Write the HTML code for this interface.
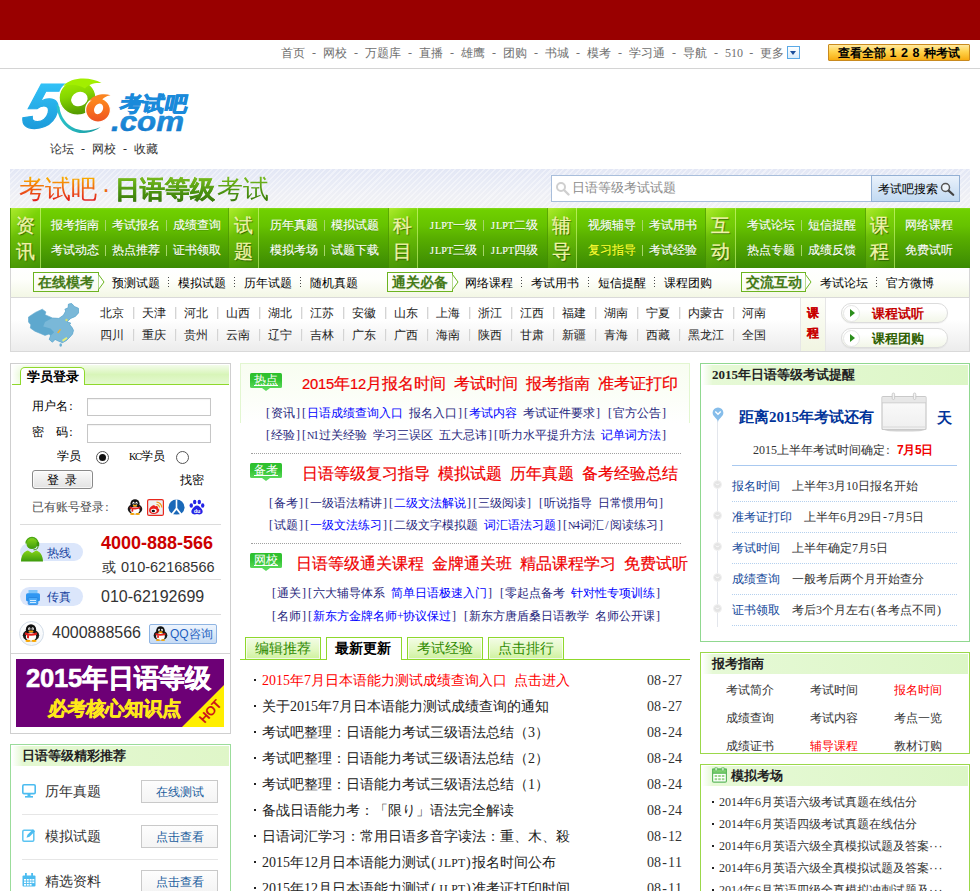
<!DOCTYPE html>
<html lang="zh"><head><meta charset="utf-8"><title>考试吧 日语等级考试</title>
<style>
*{margin:0;padding:0;box-sizing:border-box}
html,body{width:980px;height:891px;overflow:hidden;background:#fff}
body{position:relative;font-family:"Liberation Sans",sans-serif;font-size:12px;line-height:12px;color:#333}
.t{position:absolute;white-space:nowrap;font-size:12px;line-height:12px}
i{display:inline-block;width:.5em;text-align:center;font-style:normal;font-family:"Liberation Serif",serif}
i.u{font-size:.84em;width:.595em;vertical-align:baseline}
u{display:inline-block;width:1em;text-decoration:none;letter-spacing:.8px;font-family:"Liberation Sans",sans-serif;text-align:center}
.s i{font-family:"Liberation Sans",sans-serif}
.f13{font-size:13px;line-height:13px}
.f14{font-size:14px;line-height:14px}
.f15{font-size:15px;line-height:15px}
.f16{font-size:16px;line-height:16px}
.f18{font-size:18px;line-height:18px}
.b{font-weight:bold}
.g6{color:#707070}
.w{color:#fff;-webkit-text-stroke:.12px #fff;text-shadow:0 1px 0 rgba(40,90,0,.4)}
.y{color:#ff3;-webkit-text-stroke:.12px #ff3;text-shadow:0 1px 0 rgba(40,90,0,.4)}
.lab{color:#f0f4a8;font-size:19px;line-height:19px;-webkit-text-stroke:.3px #f0f4a8;text-shadow:1px 1px 1px rgba(30,70,0,.8)}
.nv{color:#26267c}
.bl{color:#00f}
.rd{color:#f00}
.hd{color:#f00000;font-size:16px;line-height:16px;-webkit-text-stroke:.2px #f00000}
.hd i{font-family:"Liberation Sans",sans-serif;font-size:.92em;width:.5435em}
.k{color:#000}
.bk{color:#222}
.lnk{color:#1b4ea0}
.dt{color:#333;font-size:14px;line-height:14px}
.sep{position:absolute;width:1px;background:#d4d4d4;box-shadow:1px 0 0 #f0f0f0}
.gsep{position:absolute;width:1px;height:11px;background:#a6d66a}
.dsep{position:absolute;width:1px;height:12px;background:repeating-linear-gradient(#4a4a4a 0,#4a4a4a 1px,rgba(0,0,0,0) 1px,rgba(0,0,0,0) 3px)}
</style></head>
<body>
<!-- part1 -->
<div style="position:absolute;left:0px;top:0px;width:980px;height:40px;background:#990000"></div>
<span class="t g6" style="left:281px;top:47px;">首页<i>&nbsp;</i><i>-</i><i>&nbsp;</i>网校<i>&nbsp;</i><i>-</i><i>&nbsp;</i>万题库<i>&nbsp;</i><i>-</i><i>&nbsp;</i>直播<i>&nbsp;</i><i>-</i><i>&nbsp;</i>雄鹰<i>&nbsp;</i><i>-</i><i>&nbsp;</i>团购<i>&nbsp;</i><i>-</i><i>&nbsp;</i>书城<i>&nbsp;</i><i>-</i><i>&nbsp;</i>模考<i>&nbsp;</i><i>-</i><i>&nbsp;</i>学习通<i>&nbsp;</i><i>-</i><i>&nbsp;</i>导航<i>&nbsp;</i><i>-</i><i>&nbsp;</i><i>5</i><i>1</i><i>0</i></span>
<span class="t g6" style="left:742px;top:47px;width:17px;letter-spacing:-.3px;"><i>&nbsp;</i><i>-</i><i>&nbsp;</i></span>
<span class="t g6" style="left:759.5px;top:47px;">更多</span>
<div style="position:absolute;left:787px;top:46px;width:13px;height:13px;border:1px solid #5aa9e6;background:linear-gradient(#fff,#d8ecfb);"><div style="position:absolute;left:2px;top:4px;width:0;height:0;border-left:3.5px solid transparent;border-right:3.5px solid transparent;border-top:4px solid #1b4f9c"></div></div>
<div style="position:absolute;left:828px;top:44px;width:142px;height:17px;border:1px solid #c98a1e;background:linear-gradient(#ffe9a0 0,#ffd24a 45%,#f7ac12 100%);border-radius:1px"></div>
<span class="t b k" style="left:838px;top:47px;">查看全部</span>
<span class="t b k s" style="left:886px;top:47px;font-size:12.5px;left:887px;"><i style="width:12px">1</i><i style="width:11px">2</i><i style="width:12px">8</i></span>
<span class="t b k" style="left:924px;top:47px;">种考试</span>
<div style="position:absolute;left:0px;top:68px;width:980px;height:1px;background:#d4d4d4"></div>
<svg style="position:absolute;left:18px;top:76px" width="175" height="62" viewBox="18 76 175 62">
<defs>
<linearGradient id="g5" x1="0" y1="0" x2="0" y2="1"><stop offset="0" stop-color="#38ccff"/><stop offset="1" stop-color="#1590d2"/></linearGradient>
<linearGradient id="gg" x1="0" y1="0" x2="0.25" y2="1"><stop offset="0" stop-color="#a6f200"/><stop offset=".5" stop-color="#86d600"/><stop offset="1" stop-color="#569c00"/></linearGradient>
<linearGradient id="go" x1="0" y1="0" x2="0" y2="1"><stop offset="0" stop-color="#ff8c1c"/><stop offset="1" stop-color="#ee5222"/></linearGradient>
<linearGradient id="gt" x1="0" y1="0" x2="1" y2="0"><stop offset="0" stop-color="#2cc4cc"/><stop offset="1" stop-color="#1a989e"/></linearGradient>
<linearGradient id="gb" x1="0" y1="0" x2="0" y2="1"><stop offset="0" stop-color="#2aa2ea"/><stop offset="1" stop-color="#0f72c6"/></linearGradient>
</defs>
<g transform="translate(19.5 128.4) skewX(-15)"><text x="0" y="0" font-family="Liberation Sans" font-weight="bold" font-style="italic" font-size="64" fill="url(#g5)" stroke="url(#g5)" stroke-width="1.2" textLength="36" lengthAdjust="spacingAndGlyphs">5</text></g>
<path d="M56.5 104C57 122 70 134 84 133C91 132.5 97 130 100.5 127C95 129.5 88 131 82 130.2C70 129 60.5 119 59.5 107Z" fill="url(#gt)"/>
<ellipse cx="77.5" cy="97.6" rx="18.4" ry="17.4" fill="url(#gg)" stroke="#fff" stroke-width="1.2"/>
<path d="M63 86C71 77 90 76.3 101.5 83C94 82.5 88 84.5 85 88.5C78 84 70 84 63 86Z" fill="#a2ee00"/>
<ellipse cx="79.4" cy="99.1" rx="8.4" ry="7" fill="#fff" transform="rotate(-22 79.4 99.1)"/>
<ellipse cx="98" cy="110" rx="12.4" ry="12" fill="url(#go)" stroke="#fff" stroke-width="1.2"/>
<path d="M89.5 100.5C94 94.5 104 93.3 110.5 95.2C106 96 102.5 98 100.5 101.5Z" fill="#fb8420"/>
<ellipse cx="98.6" cy="108.9" rx="4.2" ry="5.6" fill="#fff" transform="rotate(30 98.6 108.9)"/>
<g transform="translate(118.5 110.5) skewX(-12)"><text x="0" y="0" font-family="Liberation Sans" font-weight="bold" font-size="20.5" fill="url(#gb)" stroke="#1a8ada" stroke-width=".9" textLength="68" lengthAdjust="spacingAndGlyphs">考试吧</text></g>
<text x="111" y="131" font-family="Liberation Sans" font-weight="bold" font-style="italic" font-size="27" fill="url(#gb)" stroke="#1580d0" stroke-width=".5" textLength="73" lengthAdjust="spacingAndGlyphs">.com</text>
</svg>
<span class="t" style="left:50px;top:143px;color:#333;">论坛<i>&nbsp;</i><i>-</i><i>&nbsp;</i>网校<i>&nbsp;</i><i>-</i><i>&nbsp;</i>收藏</span>
<div style="position:absolute;left:10px;top:169px;width:960px;height:39px;background:repeating-linear-gradient(135deg,rgba(255,255,255,0) 0,rgba(255,255,255,0) 2.5px,rgba(255,255,255,.4) 2.5px,rgba(255,255,255,.4) 4px),linear-gradient(#e3e7f5 0,#e9ecf6 35%,#eff0f5 70%,#f1f1f4 100%);"></div>
<span class="t" style="left:19px;top:176px;font-size:26px;line-height:26px;background:linear-gradient(#f9a800 10%,#ee5a14 55%,#e0201e 95%);-webkit-background-clip:text;background-clip:text;color:transparent">考试吧</span>
<span class="t" style="left:98px;top:176px;font-size:26px;line-height:26px;color:#ee6a10;width:16px;text-align:center">·</span>
<span class="t" style="left:115px;top:176px;font-size:25.3px;line-height:26px;font-weight:bold;-webkit-text-stroke:.5px transparent;background:linear-gradient(#74b81c 10%,#4c9410 60%,#3c7c0c 95%);-webkit-background-clip:text;background-clip:text;color:transparent">日语等级</span>
<span class="t" style="left:217px;top:176px;font-size:26px;line-height:26px;background:linear-gradient(#74b81c 10%,#4c9410 60%,#3c7c0c 95%);-webkit-background-clip:text;background-clip:text;color:transparent">考试</span>
<div style="position:absolute;left:551px;top:175px;width:321px;height:27px;border:1px solid #a8bedb;background:#fff"></div>
<svg style="position:absolute;left:555px;top:181px" width="15" height="15" viewBox="0 0 15 15"><circle cx="6" cy="6" r="4" fill="none" stroke="#cfcfcf" stroke-width="2"/><path d="M9 9l4.5 4.5" stroke="#cfcfcf" stroke-width="2.4" stroke-linecap="round"/></svg>
<span class="t f13" style="left:572px;top:181px;color:#8c8c8c;">日语等级考试试题</span>
<div style="position:absolute;left:871px;top:175px;width:89px;height:27px;border:1px solid #93b0d4;background:linear-gradient(#eaf2fc 0,#d5e5f6 50%,#c2daf2 100%)"></div>
<span class="t k" style="left:878px;top:183px;">考试吧搜索</span>
<svg style="position:absolute;left:940px;top:182px" width="15" height="14" viewBox="0 0 15 14"><circle cx="5.5" cy="5.5" r="4" fill="#eef5fb" stroke="#555" stroke-width="1.5"/><path d="M8.6 8.6l4.6 4.2" stroke="#444" stroke-width="2.2" stroke-linecap="round"/></svg>
<div style="position:absolute;left:10px;top:208px;width:960px;height:60px;background:linear-gradient(#86da1c 0,#70d000 3%,#66c200 30%,#58ae00 50%,#4a9c02 75%,#3b8a03 100%);"></div>
<div style="position:absolute;left:10px;top:208px;width:31px;height:60px;background:linear-gradient(135deg,rgba(220,255,80,.55) 0,rgba(160,230,30,.25) 35%,rgba(120,200,20,.12) 100%);border-right:1px solid rgba(190,240,110,.65);border-left:1px solid rgba(60,130,0,.5)"></div>
<span class="t lab" style="left:15.5px;top:216px;">资</span>
<span class="t lab" style="left:15.5px;top:242px;">讯</span>
<div style="position:absolute;left:228px;top:208px;width:31px;height:60px;background:linear-gradient(135deg,rgba(220,255,80,.55) 0,rgba(160,230,30,.25) 35%,rgba(120,200,20,.12) 100%);border-right:1px solid rgba(190,240,110,.65);border-left:1px solid rgba(60,130,0,.5)"></div>
<span class="t lab" style="left:233.5px;top:216px;">试</span>
<span class="t lab" style="left:233.5px;top:242px;">题</span>
<div style="position:absolute;left:388px;top:208px;width:30px;height:60px;background:linear-gradient(135deg,rgba(220,255,80,.55) 0,rgba(160,230,30,.25) 35%,rgba(120,200,20,.12) 100%);border-right:1px solid rgba(190,240,110,.65);border-left:1px solid rgba(60,130,0,.5)"></div>
<span class="t lab" style="left:393px;top:216px;">科</span>
<span class="t lab" style="left:393px;top:242px;">目</span>
<div style="position:absolute;left:547px;top:208px;width:30px;height:60px;background:linear-gradient(135deg,rgba(220,255,80,.55) 0,rgba(160,230,30,.25) 35%,rgba(120,200,20,.12) 100%);border-right:1px solid rgba(190,240,110,.65);border-left:1px solid rgba(60,130,0,.5)"></div>
<span class="t lab" style="left:552px;top:216px;">辅</span>
<span class="t lab" style="left:552px;top:242px;">导</span>
<div style="position:absolute;left:705px;top:208px;width:31px;height:60px;background:linear-gradient(135deg,rgba(220,255,80,.55) 0,rgba(160,230,30,.25) 35%,rgba(120,200,20,.12) 100%);border-right:1px solid rgba(190,240,110,.65);border-left:1px solid rgba(60,130,0,.5)"></div>
<span class="t lab" style="left:710.5px;top:216px;">互</span>
<span class="t lab" style="left:710.5px;top:242px;">动</span>
<div style="position:absolute;left:865px;top:208px;width:30px;height:60px;background:linear-gradient(135deg,rgba(220,255,80,.55) 0,rgba(160,230,30,.25) 35%,rgba(120,200,20,.12) 100%);border-right:1px solid rgba(190,240,110,.65);border-left:1px solid rgba(60,130,0,.5)"></div>
<span class="t lab" style="left:870px;top:216px;">课</span>
<span class="t lab" style="left:870px;top:242px;">程</span>
<span class="t w" style="left:51px;top:219px;">报考指南</span>
<span class="t w" style="left:112px;top:219px;">考试报名</span>
<div class="gsep" style="left:105px;top:220px"></div>
<span class="t w" style="left:173px;top:219px;">成绩查询</span>
<div class="gsep" style="left:166px;top:220px"></div>
<span class="t w" style="left:51px;top:244px;">考试动态</span>
<span class="t w" style="left:112px;top:244px;">热点推荐</span>
<div class="gsep" style="left:105px;top:245px"></div>
<span class="t w" style="left:173px;top:244px;">证书领取</span>
<div class="gsep" style="left:166px;top:245px"></div>
<span class="t w" style="left:270px;top:219px;">历年真题</span>
<span class="t w" style="left:331px;top:219px;">模拟试题</span>
<div class="gsep" style="left:324px;top:220px"></div>
<span class="t w" style="left:270px;top:244px;">模拟考场</span>
<span class="t w" style="left:331px;top:244px;">试题下载</span>
<div class="gsep" style="left:324px;top:245px"></div>
<span class="t w" style="left:429px;top:219px;"><i class="u">J</i><i class="u">L</i><i class="u">P</i><i class="u">T</i>一级</span>
<span class="t w" style="left:490px;top:219px;"><i class="u">J</i><i class="u">L</i><i class="u">P</i><i class="u">T</i>二级</span>
<div class="gsep" style="left:483px;top:220px"></div>
<span class="t w" style="left:429px;top:244px;"><i class="u">J</i><i class="u">L</i><i class="u">P</i><i class="u">T</i>三级</span>
<span class="t w" style="left:490px;top:244px;"><i class="u">J</i><i class="u">L</i><i class="u">P</i><i class="u">T</i>四级</span>
<div class="gsep" style="left:483px;top:245px"></div>
<span class="t w" style="left:588px;top:219px;">视频辅导</span>
<span class="t w" style="left:649px;top:219px;">考试用书</span>
<div class="gsep" style="left:642px;top:220px"></div>
<span class="t y" style="left:588px;top:244px;">复习指导</span>
<span class="t w" style="left:649px;top:244px;">考试经验</span>
<div class="gsep" style="left:642px;top:245px"></div>
<span class="t w" style="left:747px;top:219px;">考试论坛</span>
<span class="t w" style="left:807.5px;top:219px;">短信提醒</span>
<div class="gsep" style="left:800.5px;top:220px"></div>
<span class="t w" style="left:747px;top:244px;">热点专题</span>
<span class="t w" style="left:807.5px;top:244px;">成绩反馈</span>
<div class="gsep" style="left:800.5px;top:245px"></div>
<span class="t w" style="left:905px;top:219px;">网络课程</span>
<span class="t w" style="left:905px;top:244px;">免费试听</span>
<div style="position:absolute;left:10px;top:268px;width:960px;height:30px;border:1px solid #d6d6d6;border-top:none;background:linear-gradient(#fff 0,#fefffb 40%,#f3f7e5 100%)"></div>
<div style="position:absolute;left:33px;top:272px;width:66px;height:20px;border:1px solid #6cb420;background:linear-gradient(#fff,#f8fbee)"></div>
<svg style="position:absolute;left:98px;top:274px" width="8" height="16" viewBox="0 0 8 16"><path d="M0.5 0.5L6 8L0.5 15.5" fill="#fff" stroke="#6cb420" stroke-width="1"/></svg>
<span class="t f14 b" style="left:38px;top:275px;color:#457a18;text-shadow:0 1px 0 rgba(190,210,160,.6);">在线模考</span>
<div style="position:absolute;left:387px;top:272px;width:66px;height:20px;border:1px solid #6cb420;background:linear-gradient(#fff,#f8fbee)"></div>
<svg style="position:absolute;left:452px;top:274px" width="8" height="16" viewBox="0 0 8 16"><path d="M0.5 0.5L6 8L0.5 15.5" fill="#fff" stroke="#6cb420" stroke-width="1"/></svg>
<span class="t f14 b" style="left:392px;top:275px;color:#457a18;text-shadow:0 1px 0 rgba(190,210,160,.6);">通关必备</span>
<div style="position:absolute;left:741px;top:272px;width:65px;height:20px;border:1px solid #6cb420;background:linear-gradient(#fff,#f8fbee)"></div>
<svg style="position:absolute;left:805px;top:274px" width="8" height="16" viewBox="0 0 8 16"><path d="M0.5 0.5L6 8L0.5 15.5" fill="#fff" stroke="#6cb420" stroke-width="1"/></svg>
<span class="t f14 b" style="left:746px;top:275px;color:#457a18;text-shadow:0 1px 0 rgba(190,210,160,.6);">交流互动</span>
<span class="t k" style="left:112px;top:277px;">预测试题</span>
<span class="t k" style="left:178px;top:277px;">模拟试题</span>
<div class="dsep" style="left:168px;top:277px"></div>
<span class="t k" style="left:244px;top:277px;">历年试题</span>
<div class="dsep" style="left:234px;top:277px"></div>
<span class="t k" style="left:310px;top:277px;">随机真题</span>
<div class="dsep" style="left:300px;top:277px"></div>
<span class="t k" style="left:465px;top:277px;">网络课程</span>
<span class="t k" style="left:531.3px;top:277px;">考试用书</span>
<div class="dsep" style="left:521.3px;top:277px"></div>
<span class="t k" style="left:597.6px;top:277px;">短信提醒</span>
<div class="dsep" style="left:587.6px;top:277px"></div>
<span class="t k" style="left:663.9px;top:277px;">课程团购</span>
<div class="dsep" style="left:653.9px;top:277px"></div>
<span class="t k" style="left:820px;top:277px;">考试论坛</span>
<span class="t k" style="left:886px;top:277px;">官方微博</span>
<div class="dsep" style="left:876px;top:277px"></div>
<div style="position:absolute;left:10px;top:297px;width:960px;height:55px;border:1px solid #d9d9d9;background:linear-gradient(#fff 0,#fff 40%,#ececec 100%)"></div>
<svg style="position:absolute;left:27.5px;top:302.5px" width="52" height="46" viewBox="0 0 52 46"><polygon points="0.5,14.0 7.4,9.4 14.3,6.2 17.9,8.9 17.0,11.7 24.4,14.9 30.8,15.4 35.4,12.2 37.7,8.0 36.8,6.2 40.0,4.8 40.4,1.1 43.7,0.5 46.4,3.4 50.5,5.3 50.5,9.9 47.3,13.5 42.7,15.4 40.4,17.7 39.1,19.0 42.7,20.0 41.8,21.8 44.1,24.6 45.5,27.3 44.6,31.0 41.8,34.2 38.6,37.4 34.5,39.7 30.8,38.3 27.1,36.5 24.4,39.3 21.2,36.5 22.5,32.8 21.2,31.0 17.0,32.4 12.4,30.5 6.9,28.2 2.3,25.0 2.8,21.8 0.5,19.0" fill="#5ea8ce"/><polygon points="24.4,14.9 30.8,15.4 35.4,12.2 37.7,8.0 36.8,6.2 40.0,4.8 40.4,1.1 43.7,0.5 46.4,3.4 50.5,5.3 50.5,9.9 47.3,13.5 42.7,15.4 40.4,17.7 39.1,19.0 42.7,20.0 41.8,21.8 44.1,24.6 45.5,27.3 44.6,31.0 41.8,34.2 38.6,37.4 34.5,39.7 30.8,38.3 27.1,36.5 24.4,39.3 21.2,36.5 22.5,32.8 26.2,29.2 22.5,25.5 15.2,23.6 17.0,19.0" fill="#7ab8d8"/><polygon points="0.5,14.0 7.4,9.4 14.3,6.2 17.9,8.9 17.0,11.7 24.4,14.9 30.8,15.4 35.4,12.2 37.7,8.0 36.8,6.2 40.0,4.8 40.4,1.1 43.7,0.5 46.4,3.4 50.5,5.3 50.5,9.9 47.3,13.5 42.7,15.4 40.4,17.7 39.1,19.0 42.7,20.0 41.8,21.8 44.1,24.6 45.5,27.3 44.6,31.0 41.8,34.2 38.6,37.4 34.5,39.7 30.8,38.3 27.1,36.5 24.4,39.3 21.2,36.5 22.5,32.8 21.2,31.0 17.0,32.4 12.4,30.5 6.9,28.2 2.3,25.0 2.8,21.8 0.5,19.0" fill="none" stroke="#5ea8ce" stroke-width=".6"/><ellipse cx="32.7" cy="42" rx="1.3" ry="1.7" fill="#6ab0d4"/><path d="M34 37l4.5-3 1 1.5-4.5 3.2z" fill="#e4ee7a"/><path d="M29 29.5l3-3.5 1 .8-2.5 3.5z" fill="#f0b030"/><circle cx="38.5" cy="17" r="1.2" fill="#d8e070"/></svg>
<span class="t" style="left:100px;top:307px;color:#222;">北京</span>
<span class="t" style="left:142px;top:307px;color:#222;">天津</span>
<div class="sep" style="left:133px;top:307px;height:12px"></div>
<span class="t" style="left:184px;top:307px;color:#222;">河北</span>
<div class="sep" style="left:175px;top:307px;height:12px"></div>
<span class="t" style="left:226px;top:307px;color:#222;">山西</span>
<div class="sep" style="left:217px;top:307px;height:12px"></div>
<span class="t" style="left:268px;top:307px;color:#222;">湖北</span>
<div class="sep" style="left:259px;top:307px;height:12px"></div>
<span class="t" style="left:310px;top:307px;color:#222;">江苏</span>
<div class="sep" style="left:301px;top:307px;height:12px"></div>
<span class="t" style="left:352px;top:307px;color:#222;">安徽</span>
<div class="sep" style="left:343px;top:307px;height:12px"></div>
<span class="t" style="left:394px;top:307px;color:#222;">山东</span>
<div class="sep" style="left:385px;top:307px;height:12px"></div>
<span class="t" style="left:436px;top:307px;color:#222;">上海</span>
<div class="sep" style="left:427px;top:307px;height:12px"></div>
<span class="t" style="left:478px;top:307px;color:#222;">浙江</span>
<div class="sep" style="left:469px;top:307px;height:12px"></div>
<span class="t" style="left:520px;top:307px;color:#222;">江西</span>
<div class="sep" style="left:511px;top:307px;height:12px"></div>
<span class="t" style="left:562px;top:307px;color:#222;">福建</span>
<div class="sep" style="left:553px;top:307px;height:12px"></div>
<span class="t" style="left:604px;top:307px;color:#222;">湖南</span>
<div class="sep" style="left:595px;top:307px;height:12px"></div>
<span class="t" style="left:646px;top:307px;color:#222;">宁夏</span>
<div class="sep" style="left:637px;top:307px;height:12px"></div>
<span class="t" style="left:688px;top:307px;color:#222;">内蒙古</span>
<div class="sep" style="left:679px;top:307px;height:12px"></div>
<span class="t" style="left:742px;top:307px;color:#222;">河南</span>
<div class="sep" style="left:733px;top:307px;height:12px"></div>
<span class="t" style="left:100px;top:329px;color:#222;">四川</span>
<span class="t" style="left:142px;top:329px;color:#222;">重庆</span>
<div class="sep" style="left:133px;top:329px;height:12px"></div>
<span class="t" style="left:184px;top:329px;color:#222;">贵州</span>
<div class="sep" style="left:175px;top:329px;height:12px"></div>
<span class="t" style="left:226px;top:329px;color:#222;">云南</span>
<div class="sep" style="left:217px;top:329px;height:12px"></div>
<span class="t" style="left:268px;top:329px;color:#222;">辽宁</span>
<div class="sep" style="left:259px;top:329px;height:12px"></div>
<span class="t" style="left:310px;top:329px;color:#222;">吉林</span>
<div class="sep" style="left:301px;top:329px;height:12px"></div>
<span class="t" style="left:352px;top:329px;color:#222;">广东</span>
<div class="sep" style="left:343px;top:329px;height:12px"></div>
<span class="t" style="left:394px;top:329px;color:#222;">广西</span>
<div class="sep" style="left:385px;top:329px;height:12px"></div>
<span class="t" style="left:436px;top:329px;color:#222;">海南</span>
<div class="sep" style="left:427px;top:329px;height:12px"></div>
<span class="t" style="left:478px;top:329px;color:#222;">陕西</span>
<div class="sep" style="left:469px;top:329px;height:12px"></div>
<span class="t" style="left:520px;top:329px;color:#222;">甘肃</span>
<div class="sep" style="left:511px;top:329px;height:12px"></div>
<span class="t" style="left:562px;top:329px;color:#222;">新疆</span>
<div class="sep" style="left:553px;top:329px;height:12px"></div>
<span class="t" style="left:604px;top:329px;color:#222;">青海</span>
<div class="sep" style="left:595px;top:329px;height:12px"></div>
<span class="t" style="left:646px;top:329px;color:#222;">西藏</span>
<div class="sep" style="left:637px;top:329px;height:12px"></div>
<span class="t" style="left:688px;top:329px;color:#222;">黑龙江</span>
<div class="sep" style="left:679px;top:329px;height:12px"></div>
<span class="t" style="left:742px;top:329px;color:#222;">全国</span>
<div class="sep" style="left:733px;top:329px;height:12px"></div>
<div style="position:absolute;left:800px;top:298px;width:26px;height:53px;background:linear-gradient(#fdfef8,#f1f5e2);border-left:1px solid #e6e6e6;border-right:1px solid #e6e6e6"></div>
<span class="t b" style="left:807px;top:307px;color:#c80000;-webkit-text-stroke:.2px #c80000;">课</span>
<span class="t b" style="left:807px;top:327px;color:#c80000;-webkit-text-stroke:.2px #c80000;">程</span>
<div style="position:absolute;left:841px;top:303px;width:107px;height:20px;border:1px solid #dcdcdc;border-radius:10px;background:linear-gradient(#fff 30%,#f2f6e8);box-shadow:0 1px 1px rgba(0,0,0,.05)"></div>
<div style="position:absolute;left:843px;top:304.5px;width:17px;height:17px;border-radius:50%;border:1px solid #e6e6e6;background:#fff"></div>
<div style="position:absolute;left:850px;top:309px;width:0;height:0;border-top:4px solid transparent;border-bottom:4px solid transparent;border-left:5px solid #2c8e1c"></div>
<span class="t f13 b" style="left:872px;top:307px;color:#c40000;">课程试听</span>
<div style="position:absolute;left:841px;top:328px;width:107px;height:20px;border:1px solid #dcdcdc;border-radius:10px;background:linear-gradient(#fff 30%,#f2f6e8);box-shadow:0 1px 1px rgba(0,0,0,.05)"></div>
<div style="position:absolute;left:843px;top:329.5px;width:17px;height:17px;border-radius:50%;border:1px solid #e6e6e6;background:#fff"></div>
<div style="position:absolute;left:850px;top:334px;width:0;height:0;border-top:4px solid transparent;border-bottom:4px solid transparent;border-left:5px solid #2c8e1c"></div>
<span class="t f13 b" style="left:872px;top:332px;color:#2f5f00;">课程团购</span>
<!-- part2 -->
<div style="position:absolute;left:10px;top:363px;width:221px;height:371px;border:1px solid #cfcfcf;background:#fff"></div>
<div style="position:absolute;left:12px;top:365px;width:217px;height:20px;background:linear-gradient(90deg,#fff 0,rgba(255,255,255,0) 7%),linear-gradient(#f3fcea 0,#d8f5b9 50%,#e4f9d0 100%);border-bottom:1px solid #8fd82c"></div>
<div style="position:absolute;left:20px;top:367px;width:65px;height:18px;border:1px solid #8fd82c;border-bottom:none;border-radius:5px 5px 0 0;background:#fff"></div>
<span class="t f13 b k" style="left:27px;top:370px;">学员登录</span>
<span class="t k" style="left:32px;top:400px;">用户名<i>:</i></span>
<span class="t k" style="left:32px;top:426px;">密<i>&nbsp;</i><i>&nbsp;</i>码<i>:</i></span>
<div style="position:absolute;left:87px;top:398px;width:124px;height:18px;border:1px solid #c6c6c6;background:#fff;box-shadow:inset 0 1px 1px rgba(0,0,0,.05)"></div>
<div style="position:absolute;left:87px;top:424px;width:124px;height:19px;border:1px solid #c6c6c6;background:#fff;box-shadow:inset 0 1px 1px rgba(0,0,0,.05)"></div>
<span class="t k" style="left:57px;top:450px;">学员</span>
<div style="position:absolute;left:96px;top:451px;width:13px;height:13px;border:1px solid #555;border-radius:50%;background:#fff"><div style="position:absolute;left:2px;top:2px;width:7px;height:7px;border-radius:50%;background:#111"></div></div>
<span class="t k" style="left:129px;top:450px;"><i class="u">K</i><i class="u">C</i>学员</span>
<div style="position:absolute;left:176px;top:451px;width:13px;height:13px;border:1px solid #555;border-radius:50%;background:#fff"></div>
<div style="position:absolute;left:32px;top:470px;width:61px;height:19px;border:1px solid #8a8a8a;border-radius:3px;background:linear-gradient(#fbfbfb,#e2e2e2);box-shadow:inset 0 0 0 1px rgba(255,255,255,.7)"></div>
<span class="t k" style="left:47px;top:474px;">登<i>&nbsp;</i>录</span>
<span class="t k" style="left:180px;top:474px;">找密</span>
<span class="t" style="left:32px;top:501px;color:#4a4a4a;">已有账号登录<i>:</i></span>
<svg style="position:absolute;left:126.5px;top:498.5px" width="16" height="16" viewBox="0 0 16 16"><ellipse cx="8" cy="10" rx="7.3" ry="5.3" fill="#1a1a1a"/><ellipse cx="8" cy="4.8" rx="4.6" ry="4.6" fill="#111"/><ellipse cx="8" cy="11.3" rx="4.6" ry="3.8" fill="#fff"/><ellipse cx="6.5" cy="4.2" rx="1" ry="1.4" fill="#fff"/><ellipse cx="9.5" cy="4.2" rx="1" ry="1.4" fill="#fff"/><circle cx="6.8" cy="4.4" r=".5" fill="#000"/><circle cx="9.2" cy="4.4" r=".5" fill="#000"/><ellipse cx="8" cy="6.6" rx="2.3" ry=".9" fill="#f7a400"/><path d="M3 7.4C6 9 10 9 13 7.4L13.5 9.3C10 10.8 6 10.8 2.5 9.3Z" fill="#e5201c"/><path d="M4.6 9.5l1.8.5-.3 2.8-1.7-.4z" fill="#e5201c"/><ellipse cx="5.3" cy="15" rx="2.3" ry="1" fill="#f7a400"/><ellipse cx="10.7" cy="15" rx="2.3" ry="1" fill="#f7a400"/></svg>
<svg style="position:absolute;left:147px;top:498.5px" width="17" height="17" viewBox="0 0 17 17"><rect x=".6" y=".6" width="15.8" height="15.8" rx="1.5" fill="#eef0f2" stroke="#e8281e" stroke-width="1.2"/><path d="M9.5 5.5a3 3 0 0 1 3 3" fill="none" stroke="#f59a1a" stroke-width="1.2"/><path d="M9.5 3.2a5.3 5.3 0 0 1 5.3 5.3" fill="none" stroke="#f59a1a" stroke-width="1.2"/><path d="M2 11.5c0-2.5 3-5.5 5.2-5.2 1 .2.8 1.2.8 1.2s2-1 2.8.2c.4.7 0 1.5 0 1.5s1.7.5 1.5 2.1C12 13.5 9.5 15 6.8 15 4 15 2 13.5 2 11.5z" fill="#e8201c"/><ellipse cx="6.7" cy="11.8" rx="3" ry="2.1" fill="#fff"/><ellipse cx="6.3" cy="12" rx="1.7" ry="1.3" fill="#111"/></svg>
<svg style="position:absolute;left:167.5px;top:498.5px" width="17" height="17" viewBox="0 0 17 17"><ellipse cx="8.5" cy="8.3" rx="8" ry="7.8" fill="#1a68b8"/><path d="M7.7 0.5h1.6v8.5l4.3 5.6-1.3 1.2-3.8-4.8-3.8 4.8-1.3-1.2 4.3-5.6z" fill="#fff"/><rect x="0" y="15.5" width="17" height="1.5" fill="#fff"/></svg>
<svg style="position:absolute;left:189px;top:498.5px" width="16" height="17" viewBox="0 0 16 17"><g fill="#2424e6"><ellipse cx="2.3" cy="6.5" rx="1.7" ry="2.2"/><ellipse cx="5.7" cy="3" rx="1.7" ry="2.3"/><ellipse cx="10.3" cy="3" rx="1.7" ry="2.3"/><ellipse cx="13.7" cy="6.5" rx="1.7" ry="2.2"/><path d="M8 6.5c2.2 0 3.2 2 4.7 3.6 1.5 1.6 1.3 4.7-1.2 5.2-1.5.3-2.3-.2-3.5-.2s-2 .5-3.5.2C2 14.8 1.8 11.7 3.3 10.1 4.8 8.5 5.8 6.5 8 6.5z"/></g><text x="8" y="14" font-family="Liberation Sans" font-size="5.5" font-weight="bold" fill="#fff" text-anchor="middle">du</text></svg>
<div style="position:absolute;left:20px;top:524px;width:201px;height:1px;background:#dcdcdc"></div>
<div style="position:absolute;left:20px;top:543px;width:63px;height:18px;background:#dbe6fb;border-radius:9px"></div>
<svg style="position:absolute;left:20px;top:536px" width="24" height="26" viewBox="0 0 24 26"><defs><linearGradient id="pg" x1="0" y1="0" x2="0" y2="1"><stop offset="0" stop-color="#86d418"/><stop offset="1" stop-color="#3c9a0c"/></linearGradient></defs><circle cx="12" cy="7.5" r="5.6" fill="url(#pg)"/><path d="M1 25.5c0-7 4-10.5 7-11l4 2.5 4-2.5c3 .5 7 4 7 11z" fill="url(#pg)"/><path d="M6 7.5a6 6 0 0 1 12 0" fill="none" stroke="#4aa80e" stroke-width="1.4"/><rect x="16.6" y="6" width="2.6" height="4.5" rx="1" fill="#3e980c"/><path d="M18 10.5c0 2.5-2 3.3-4.5 3.3" fill="none" stroke="#3e980c" stroke-width="1"/></svg>
<span class="t" style="left:47px;top:547px;color:#153f9e;">热线</span>
<span class="t s" style="left:101px;top:534px;font-size:18px;line-height:18px;color:#cc0000;font-weight:bold;">4000-888-566</span>
<span class="t f14" style="left:102px;top:560px;color:#333;">或</span>
<span class="t s" style="left:121px;top:559px;font-size:14.5px;line-height:16px;color:#333;">010-62168566</span>
<div style="position:absolute;left:20px;top:579px;width:201px;height:1px;background:#dcdcdc"></div>
<div style="position:absolute;left:20px;top:587px;width:63px;height:19px;background:#dbe6fb;border-radius:9.5px"></div>
<svg style="position:absolute;left:26px;top:589.5px" width="14" height="15" viewBox="0 0 14 15"><rect x="2.5" y="0" width="9" height="4" fill="#7cc4fa"/><rect x="0" y="3.2" width="14" height="8" rx="1.5" fill="#2f97f2"/><rect x="2.2" y="7.5" width="9.6" height="7" rx="1" fill="#49a9f7" stroke="#1f80dd" stroke-width=".7"/><rect x="4" y="10" width="6" height="1" fill="#d6ecff"/><rect x="4" y="12" width="6" height="1" fill="#d6ecff"/></svg>
<span class="t" style="left:47px;top:591px;color:#153f9e;">传真</span>
<span class="t s" style="left:101px;top:589px;font-size:16px;line-height:16px;color:#333;">010-62192699</span>
<div style="position:absolute;left:20px;top:614px;width:201px;height:1px;background:#dcdcdc"></div>
<div style="position:absolute;left:18.5px;top:621px;width:25px;height:25px;border:1px solid #d3dde8;border-radius:50%;background:linear-gradient(#fff,#f1f5f9)"></div>
<svg style="position:absolute;left:22px;top:624px" width="18" height="18" viewBox="0 0 16 16"><ellipse cx="8" cy="10" rx="7.3" ry="5.3" fill="#1a1a1a"/><ellipse cx="8" cy="4.8" rx="4.6" ry="4.6" fill="#111"/><ellipse cx="8" cy="11.3" rx="4.6" ry="3.8" fill="#fff"/><ellipse cx="6.5" cy="4.2" rx="1" ry="1.4" fill="#fff"/><ellipse cx="9.5" cy="4.2" rx="1" ry="1.4" fill="#fff"/><circle cx="6.8" cy="4.4" r=".5" fill="#000"/><circle cx="9.2" cy="4.4" r=".5" fill="#000"/><ellipse cx="8" cy="6.6" rx="2.3" ry=".9" fill="#f7a400"/><path d="M3 7.4C6 9 10 9 13 7.4L13.5 9.3C10 10.8 6 10.8 2.5 9.3Z" fill="#e5201c"/><path d="M4.6 9.5l1.8.5-.3 2.8-1.7-.4z" fill="#e5201c"/><ellipse cx="5.3" cy="15" rx="2.3" ry="1" fill="#f7a400"/><ellipse cx="10.7" cy="15" rx="2.3" ry="1" fill="#f7a400"/></svg>
<span class="t s" style="left:52px;top:625px;font-size:16px;line-height:16px;color:#333;">4000888566</span>
<div style="position:absolute;left:149px;top:624px;width:68px;height:20px;border:1px solid #8fb4e2;border-radius:2px;background:linear-gradient(#eef5fd,#c6dbf4)"></div>
<svg style="position:absolute;left:152.5px;top:626px" width="15" height="15" viewBox="0 0 16 16"><ellipse cx="8" cy="10" rx="7.3" ry="5.3" fill="#1a1a1a"/><ellipse cx="8" cy="4.8" rx="4.6" ry="4.6" fill="#111"/><ellipse cx="8" cy="11.3" rx="4.6" ry="3.8" fill="#fff"/><ellipse cx="6.5" cy="4.2" rx="1" ry="1.4" fill="#fff"/><ellipse cx="9.5" cy="4.2" rx="1" ry="1.4" fill="#fff"/><circle cx="6.8" cy="4.4" r=".5" fill="#000"/><circle cx="9.2" cy="4.4" r=".5" fill="#000"/><ellipse cx="8" cy="6.6" rx="2.3" ry=".9" fill="#f7a400"/><path d="M3 7.4C6 9 10 9 13 7.4L13.5 9.3C10 10.8 6 10.8 2.5 9.3Z" fill="#e5201c"/><path d="M4.6 9.5l1.8.5-.3 2.8-1.7-.4z" fill="#e5201c"/><ellipse cx="5.3" cy="15" rx="2.3" ry="1" fill="#f7a400"/><ellipse cx="10.7" cy="15" rx="2.3" ry="1" fill="#f7a400"/></svg>
<span class="t s" style="left:170px;top:628px;color:#1d5fc0;">QQ咨询</span>
<div style="position:absolute;left:11px;top:653px;width:219px;height:1px;background:#d4d4d4"></div>
<div style="position:absolute;left:16px;top:659px;width:208px;height:68px;background:#6d0076;overflow:hidden"><div style="position:absolute;left:166px;top:26px;width:0;height:0;border-left:42px solid transparent;border-bottom:42px solid #ffee00"></div><span class="t s" style="left:174px;top:46px;font-size:13px;line-height:13px;font-weight:bold;color:#cc141a;transform:rotate(-47deg);transform-origin:50% 50%;width:40px;text-align:center;letter-spacing:-.5px">HOT</span></div>
<span class="t s b" style="left:26px;top:665px;font-size:25.5px;line-height:26px;color:#fff;letter-spacing:-.2px;-webkit-text-stroke:.6px #fff;">2015年日语等级</span>
<span class="t b" style="left:48px;top:699px;font-size:19.2px;line-height:20px;color:#ffe81a;transform:skewX(-3deg);-webkit-text-stroke:.6px #ffe81a;">必考核心知识点</span>
<div style="position:absolute;left:10px;top:744px;width:221px;height:160px;border:1px solid #9bdc9b;background:#fff"></div>
<div style="position:absolute;left:12px;top:746px;width:217px;height:20px;background:linear-gradient(90deg,#fff 0,#e4f8d2 5%,#dff6c8 100%)"></div>
<span class="t f13 b bk" style="left:22px;top:749px;">日语等级精彩推荐</span>
<span class="t f14" style="left:45px;top:784px;color:#333;">历年真题</span>
<div style="position:absolute;left:141px;top:780px;width:77px;height:23px;border:1px solid #c9c9c9;background:linear-gradient(#fdfdfd,#f4f4f4)"></div>
<span class="t" style="left:156px;top:786px;color:#1a5c9c;">在线测试</span>
<div style="position:absolute;left:22px;top:813.5px;width:196px;height:1px;background:#e6e6e6"></div>
<span class="t f14" style="left:45px;top:829px;color:#333;">模拟试题</span>
<div style="position:absolute;left:141px;top:825px;width:77px;height:23px;border:1px solid #c9c9c9;background:linear-gradient(#fdfdfd,#f4f4f4)"></div>
<span class="t" style="left:156px;top:831px;color:#1a5c9c;">点击查看</span>
<div style="position:absolute;left:22px;top:858.5px;width:196px;height:1px;background:#e6e6e6"></div>
<span class="t f14" style="left:45px;top:874px;color:#333;">精选资料</span>
<div style="position:absolute;left:141px;top:870px;width:77px;height:23px;border:1px solid #c9c9c9;background:linear-gradient(#fdfdfd,#f4f4f4)"></div>
<span class="t" style="left:156px;top:876px;color:#1a5c9c;">点击查看</span>
<svg style="position:absolute;left:21.5px;top:784px" width="14" height="14" viewBox="0 0 14 14"><rect x=".8" y=".8" width="12.4" height="8.8" rx="1.2" fill="#fff" stroke="#4cbcf0" stroke-width="1.6"/><rect x="5.5" y="10" width="3" height="2" fill="#4cbcf0"/><rect x="3" y="12" width="8" height="1.6" fill="#4cbcf0"/></svg>
<svg style="position:absolute;left:21.5px;top:828px" width="14" height="14" viewBox="0 0 14 14"><rect x=".8" y="2.2" width="11" height="11" rx="1.2" fill="#fff" stroke="#5cc4f2" stroke-width="1.5"/><path d="M4.5 9.8l1-3L11 1.2l2 2-5.5 5.6z" fill="#4cbcf0"/></svg>
<svg style="position:absolute;left:21.5px;top:873px" width="14" height="14" viewBox="0 0 14 14"><rect x=".5" y="2.5" width="13" height="11" rx="1" fill="#4cbcf0"/><rect x="3" y="0" width="1.8" height="4.5" fill="#4cbcf0"/><rect x="9.2" y="0" width="1.8" height="4.5" fill="#4cbcf0"/><g fill="#fff"><rect x="2" y="6" width="2" height="1.6"/><rect x="4.8" y="6" width="2" height="1.6"/><rect x="7.6" y="6" width="2" height="1.6"/><rect x="10.3" y="6" width="2" height="1.6"/><rect x="2" y="8.5" width="2" height="1.6"/><rect x="4.8" y="8.5" width="2" height="1.6"/><rect x="7.6" y="8.5" width="2" height="1.6"/><rect x="10.3" y="8.5" width="2" height="1.6"/><rect x="2" y="11" width="2" height="1.6"/><rect x="4.8" y="11" width="2" height="1.6"/><rect x="7.6" y="11" width="2" height="1.6"/></g></svg>
<!-- part3 -->
<div style="position:absolute;left:240px;top:363px;width:450px;height:60px;border:1px solid #e2f6d0;border-bottom:none;background:linear-gradient(#f8fdf1 0,#fbfef7 50%,#fff 100%)"></div>
<div style="position:absolute;left:250px;top:373px;width:32px;height:15px;background:linear-gradient(#2cc02c 0,#34c434 50%,#58d858 100%);border-radius:1.5px"></div><div style="position:absolute;left:262px;top:388px;width:0;height:0;border-left:4px solid transparent;border-right:4px solid transparent;border-top:3px solid #58d858"></div><span class="t" style="left:254px;top:374px;color:#fff;text-decoration:underline;text-underline-offset:1px;">热点</span>
<span class="t hd" style="left:302px;top:376px;"><i>2</i><i>0</i><i>1</i><i>5</i>年<i>1</i><i>2</i>月报名时间</span>
<span class="t hd" style="left:454px;top:376px;">考试时间</span>
<span class="t hd" style="left:526px;top:376px;">报考指南</span>
<span class="t hd" style="left:598px;top:376px;">准考证打印</span>
<span class="t nv" style="left:265px;top:407px;"><i>[</i>资讯<i>]</i><i>[</i></span>
<span class="t bl" style="left:307px;top:407px;">日语成绩查询入口</span>
<span class="t nv" style="left:409px;top:407px;">报名入口<i>]</i><i>[</i></span>
<span class="t bl" style="left:469px;top:407px;">考试内容</span>
<span class="t nv" style="left:523px;top:407px;">考试证件要求<i>]</i><i>&nbsp;</i><i>[</i>官方公告<i>]</i></span>
<span class="t nv" style="left:265px;top:429px;"><i>[</i>经验<i>]</i><i>[</i><i class="u">N</i><i>1</i>过关经验<i>&nbsp;</i>学习三误区<i>&nbsp;</i>五大忌讳<i>]</i><i>[</i>听力水平提升方法<i>&nbsp;</i></span>
<span class="t bl" style="left:601px;top:429px;">记单词方法</span>
<span class="t nv" style="left:661px;top:429px;"><i>]</i></span>
<div style="position:absolute;left:251px;top:453px;width:430px;height:0px;border-top:1px dotted #a0a0a0"></div>
<div style="position:absolute;left:250px;top:463px;width:32px;height:15px;background:linear-gradient(#2cc02c 0,#34c434 50%,#58d858 100%);border-radius:1.5px"></div><div style="position:absolute;left:262px;top:478px;width:0;height:0;border-left:4px solid transparent;border-right:4px solid transparent;border-top:3px solid #58d858"></div><span class="t" style="left:254px;top:464px;color:#fff;text-decoration:underline;text-underline-offset:1px;">备考</span>
<span class="t hd" style="left:302px;top:466px;">日语等级复习指导</span>
<span class="t hd" style="left:438px;top:466px;">模拟试题</span>
<span class="t hd" style="left:510px;top:466px;">历年真题</span>
<span class="t hd" style="left:582px;top:466px;">备考经验总结</span>
<span class="t nv" style="left:268px;top:497px;"><i>[</i>备考<i>]</i><i>[</i>一级语法精讲<i>]</i><i>[</i></span>
<span class="t bl" style="left:394px;top:497px;">二级文法解说</span>
<span class="t nv" style="left:466px;top:497px;"><i>]</i><i>[</i>三级阅读<i>]</i><i>&nbsp;</i><i>[</i>听说指导<i>&nbsp;</i>日常惯用句<i>]</i></span>
<span class="t nv" style="left:268px;top:519px;"><i>[</i>试题<i>]</i><i>[</i></span>
<span class="t bl" style="left:310px;top:519px;">一级文法练习</span>
<span class="t nv" style="left:382px;top:519px;"><i>]</i><i>[</i>二级文字模拟题<i>&nbsp;</i></span>
<span class="t bl" style="left:484px;top:519px;">词汇语法习题</span>
<span class="t nv" style="left:556px;top:519px;"><i>]</i><i>[</i><i class="u">N</i><i>4</i>词汇<i>/</i>阅读练习<i>]</i></span>
<div style="position:absolute;left:251px;top:543px;width:430px;height:0px;border-top:1px dotted #a0a0a0"></div>
<div style="position:absolute;left:250px;top:553px;width:32px;height:15px;background:linear-gradient(#2cc02c 0,#34c434 50%,#58d858 100%);border-radius:1.5px"></div><div style="position:absolute;left:262px;top:568px;width:0;height:0;border-left:4px solid transparent;border-right:4px solid transparent;border-top:3px solid #58d858"></div><span class="t" style="left:254px;top:554px;color:#fff;text-decoration:underline;text-underline-offset:1px;">网校</span>
<span class="t hd" style="left:295.5px;top:556px;">日语等级通关课程</span>
<span class="t hd" style="left:431.5px;top:556px;">金牌通关班</span>
<span class="t hd" style="left:519.5px;top:556px;">精品课程学习</span>
<span class="t hd" style="left:623.5px;top:556px;">免费试听</span>
<span class="t nv" style="left:271px;top:587px;"><i>[</i>通关<i>]</i><i>[</i>六大辅导体系<i>&nbsp;</i></span>
<span class="t bl" style="left:391px;top:587px;">简单日语极速入门</span>
<span class="t nv" style="left:487px;top:587px;"><i>]</i><i>&nbsp;</i><i>[</i>零起点备考<i>&nbsp;</i></span>
<span class="t bl" style="left:571px;top:587px;">针对性专项训练</span>
<span class="t nv" style="left:655px;top:587px;"><i>]</i></span>
<span class="t nv" style="left:271px;top:610px;"><i>[</i>名师<i>]</i><i>[</i></span>
<span class="t bl" style="left:313px;top:610px;">新东方金牌名师<i>+</i>协议保过</span>
<span class="t nv" style="left:451px;top:610px;"><i>]</i><i>&nbsp;</i><i>[</i>新东方唐盾桑日语教学<i>&nbsp;</i>名师公开课<i>]</i></span>
<div style="position:absolute;left:240px;top:659px;width:450px;height:1px;background:#8fd82c"></div>
<div style="position:absolute;left:245px;top:637px;width:76px;height:22px;border:1px solid #8fd82c;border-bottom:none;box-shadow:inset 0 0 0 1px rgba(255,255,255,.7);background:linear-gradient(#f3fce6 0,#e2f8c2 55%,#cef29e 100%)"></div>
<span class="t f14" style="left:255px;top:641px;color:#2f8a00;">编辑推荐</span>
<div style="position:absolute;left:326px;top:637px;width:76px;height:23px;border:1px solid #8fd82c;border-bottom:none;background:#fff"></div>
<span class="t f14 b k" style="left:334.5px;top:641px;">最新更新</span>
<div style="position:absolute;left:407px;top:637px;width:76px;height:22px;border:1px solid #8fd82c;border-bottom:none;box-shadow:inset 0 0 0 1px rgba(255,255,255,.7);background:linear-gradient(#f3fce6 0,#e2f8c2 55%,#cef29e 100%)"></div>
<span class="t f14" style="left:417px;top:641px;color:#2f8a00;">考试经验</span>
<div style="position:absolute;left:488px;top:637px;width:76px;height:22px;border:1px solid #8fd82c;border-bottom:none;box-shadow:inset 0 0 0 1px rgba(255,255,255,.7);background:linear-gradient(#f3fce6 0,#e2f8c2 55%,#cef29e 100%)"></div>
<span class="t f14" style="left:498px;top:641px;color:#2f8a00;">点击排行</span>
<div style="position:absolute;left:253.5px;top:679px;width:2px;height:2px;background:#222"></div>
<span class="t f14" style="left:262px;top:673px;color:#f00;"><i>2</i><i>0</i><i>1</i><i>5</i>年<i>7</i>月日本语能力测试成绩查询入口<i>&nbsp;</i>点击进入</span>
<span class="t dt" style="left:647px;top:673px;"><i>0</i><i>8</i><i>-</i><i>2</i><i>7</i></span>
<div style="position:absolute;left:253.5px;top:705px;width:2px;height:2px;background:#222"></div>
<span class="t f14" style="left:262px;top:699px;color:#222;">关于<i>2</i><i>0</i><i>1</i><i>5</i>年<i>7</i>月日本语能力测试成绩查询的通知</span>
<span class="t dt" style="left:647px;top:699px;"><i>0</i><i>8</i><i>-</i><i>2</i><i>7</i></span>
<div style="position:absolute;left:253.5px;top:731px;width:2px;height:2px;background:#222"></div>
<span class="t f14" style="left:262px;top:725px;color:#222;">考试吧整理：日语能力考试三级语法总结（<i>3</i>）</span>
<span class="t dt" style="left:647px;top:725px;"><i>0</i><i>8</i><i>-</i><i>2</i><i>4</i></span>
<div style="position:absolute;left:253.5px;top:757px;width:2px;height:2px;background:#222"></div>
<span class="t f14" style="left:262px;top:751px;color:#222;">考试吧整理：日语能力考试三级语法总结（<i>2</i>）</span>
<span class="t dt" style="left:647px;top:751px;"><i>0</i><i>8</i><i>-</i><i>2</i><i>4</i></span>
<div style="position:absolute;left:253.5px;top:783px;width:2px;height:2px;background:#222"></div>
<span class="t f14" style="left:262px;top:777px;color:#222;">考试吧整理：日语能力考试三级语法总结（<i>1</i>）</span>
<span class="t dt" style="left:647px;top:777px;"><i>0</i><i>8</i><i>-</i><i>2</i><i>4</i></span>
<div style="position:absolute;left:253.5px;top:809px;width:2px;height:2px;background:#222"></div>
<span class="t f14" style="left:262px;top:803px;color:#222;">备战日语能力考：「限り」语法完全解读</span>
<span class="t dt" style="left:647px;top:803px;"><i>0</i><i>8</i><i>-</i><i>2</i><i>4</i></span>
<div style="position:absolute;left:253.5px;top:835px;width:2px;height:2px;background:#222"></div>
<span class="t f14" style="left:262px;top:829px;color:#222;">日语词汇学习：常用日语多音字读法：重、木、殺</span>
<span class="t dt" style="left:647px;top:829px;"><i>0</i><i>8</i><i>-</i><i>1</i><i>2</i></span>
<div style="position:absolute;left:253.5px;top:861px;width:2px;height:2px;background:#222"></div>
<span class="t f14" style="left:262px;top:855px;color:#222;"><i>2</i><i>0</i><i>1</i><i>5</i>年<i>1</i><i>2</i>月日本语能力测试<i>(</i><i class="u">J</i><i class="u">L</i><i class="u">P</i><i class="u">T</i><i>)</i>报名时间公布</span>
<span class="t dt" style="left:647px;top:855px;"><i>0</i><i>8</i><i>-</i><i>1</i><i>1</i></span>
<div style="position:absolute;left:253.5px;top:887px;width:2px;height:2px;background:#222"></div>
<span class="t f14" style="left:262px;top:881px;color:#222;"><i>2</i><i>0</i><i>1</i><i>5</i>年<i>1</i><i>2</i>月日本语能力测试<i>(</i><i class="u">J</i><i class="u">L</i><i class="u">P</i><i class="u">T</i><i>)</i>准考证打印时间</span>
<span class="t dt" style="left:647px;top:881px;"><i>0</i><i>8</i><i>-</i><i>1</i><i>1</i></span>
<!-- part4 -->
<div style="position:absolute;left:700px;top:363px;width:270px;height:279px;border:1px solid #90d890;background:#fff"></div>
<div style="position:absolute;left:702px;top:365px;width:266px;height:20px;background:linear-gradient(90deg,#fff 0,#e6f9d6 4%,#dcf6c6 100%)"></div>
<span class="t f13 b bk" style="left:712px;top:368px;"><i>2</i><i>0</i><i>1</i><i>5</i>年日语等级考试提醒</span>
<div style="position:absolute;left:717px;top:418px;width:1px;height:209px;background:#e3e6ec"></div>
<svg style="position:absolute;left:711.5px;top:406.5px" width="12" height="16" viewBox="0 0 12 16"><path d="M6 15.5C6 11.5 .6 10 .6 5.8A5.4 5.4 0 0 1 11.4 5.8C11.4 10 6 11.5 6 15.5z" fill="#86bdea"/><path d="M3.3 4.6L6 7.3 8.7 4.6" fill="none" stroke="#fff" stroke-width="1.4"/></svg>
<span class="t f15 b" style="left:739px;top:409px;color:#003399;">距离<i>2</i><i>0</i><i>1</i><i>5</i>年考试还有</span>
<span class="t f15 b" style="left:937px;top:410px;color:#003399;">天</span>
<svg style="position:absolute;left:881px;top:392px" width="47" height="41" viewBox="0 0 47 41"><defs><linearGradient id="cg" x1="0" y1="0" x2="0" y2="1"><stop offset="0" stop-color="#fbfbfb"/><stop offset="1" stop-color="#efefef"/></linearGradient></defs><ellipse cx="23.5" cy="38" rx="20" ry="1.6" fill="#bdbdbd" opacity=".7"/><rect x="1" y="4.5" width="44" height="33" rx="1" fill="url(#cg)" stroke="#c9c9c9" stroke-width="1.2"/><rect x="1.6" y="5.1" width="42.8" height="5.4" fill="#e7e7e7"/><path d="M1 10.8H45" stroke="#cdcdcd" stroke-width="1"/><path d="M1 35H45" stroke="#d8d8d8" stroke-width="1"/><rect x="11.2" y="1" width="2.4" height="6.5" rx="1.2" fill="#f2f2f2" stroke="#c4c4c4" stroke-width=".8"/><rect x="32.4" y="1" width="2.4" height="6.5" rx="1.2" fill="#f2f2f2" stroke="#c4c4c4" stroke-width=".8"/></svg>
<span class="t" style="left:753px;top:444px;color:#333;"><i>2</i><i>0</i><i>1</i><i>5</i>上半年考试时间确定<i>:</i></span>
<span class="t b s" style="left:897px;top:444px;color:#f00000;"><i>7</i>月<i>5</i>日</span>
<div style="position:absolute;left:732px;top:465px;width:225px;height:1px;background:#a9c9f0"></div>
<div style="position:absolute;left:712.5px;top:480px;width:9px;height:9px;border-radius:50%;background:#e4e4e4;border:1px solid #f3f3f3"><svg width="7" height="7" viewBox="0 0 7 7" style="position:absolute;left:0;top:0"><path d="M2 2.6l1.5 1.5L5 2.6" fill="none" stroke="#fff" stroke-width="1"/></svg></div>
<span class="t" style="left:732px;top:480px;color:#14499a;">报名时间</span>
<span class="t" style="left:792px;top:480px;color:#333;">上半年<i>3</i>月<i>1</i><i>0</i>日报名开始</span>
<div style="position:absolute;left:732px;top:501px;width:225px;height:0px;border-top:1px dotted #b4d0ee"></div>
<div style="position:absolute;left:712.5px;top:511px;width:9px;height:9px;border-radius:50%;background:#e4e4e4;border:1px solid #f3f3f3"><svg width="7" height="7" viewBox="0 0 7 7" style="position:absolute;left:0;top:0"><path d="M2 2.6l1.5 1.5L5 2.6" fill="none" stroke="#fff" stroke-width="1"/></svg></div>
<span class="t" style="left:732px;top:511px;color:#14499a;">准考证打印</span>
<span class="t" style="left:804px;top:511px;color:#333;">上半年<i>6</i>月<i>2</i><i>9</i>日<i>-</i><i>7</i>月<i>5</i>日</span>
<div style="position:absolute;left:732px;top:532px;width:225px;height:0px;border-top:1px dotted #b4d0ee"></div>
<div style="position:absolute;left:712.5px;top:542px;width:9px;height:9px;border-radius:50%;background:#e4e4e4;border:1px solid #f3f3f3"><svg width="7" height="7" viewBox="0 0 7 7" style="position:absolute;left:0;top:0"><path d="M2 2.6l1.5 1.5L5 2.6" fill="none" stroke="#fff" stroke-width="1"/></svg></div>
<span class="t" style="left:732px;top:542px;color:#14499a;">考试时间</span>
<span class="t" style="left:792px;top:542px;color:#333;">上半年确定<i>7</i>月<i>5</i>日</span>
<div style="position:absolute;left:732px;top:563px;width:225px;height:0px;border-top:1px dotted #b4d0ee"></div>
<div style="position:absolute;left:712.5px;top:573px;width:9px;height:9px;border-radius:50%;background:#e4e4e4;border:1px solid #f3f3f3"><svg width="7" height="7" viewBox="0 0 7 7" style="position:absolute;left:0;top:0"><path d="M2 2.6l1.5 1.5L5 2.6" fill="none" stroke="#fff" stroke-width="1"/></svg></div>
<span class="t" style="left:732px;top:573px;color:#14499a;">成绩查询</span>
<span class="t" style="left:792px;top:573px;color:#333;">一般考后两个月开始查分</span>
<div style="position:absolute;left:732px;top:594px;width:225px;height:0px;border-top:1px dotted #b4d0ee"></div>
<div style="position:absolute;left:712.5px;top:604px;width:9px;height:9px;border-radius:50%;background:#e4e4e4;border:1px solid #f3f3f3"><svg width="7" height="7" viewBox="0 0 7 7" style="position:absolute;left:0;top:0"><path d="M2 2.6l1.5 1.5L5 2.6" fill="none" stroke="#fff" stroke-width="1"/></svg></div>
<span class="t" style="left:732px;top:604px;color:#14499a;">证书领取</span>
<span class="t" style="left:792px;top:604px;color:#333;">考后<i>3</i>个月左右<i>(</i>各考点不同<i>)</i></span>
<div style="position:absolute;left:732px;top:625px;width:225px;height:0px;border-top:1px dotted #b4d0ee"></div>
<div style="position:absolute;left:700px;top:652px;width:270px;height:102px;border:1px solid #9bd84a;background:#fff;overflow:hidden"></div>
<div style="position:absolute;left:702px;top:654px;width:266px;height:20px;background:linear-gradient(90deg,#fff 0,#e6f9d6 4%,#dcf6c6 100%)"></div>
<span class="t f13 b bk" style="left:712px;top:657px;">报考指南</span>
<div style="position:absolute;left:726px;top:684px;width:48px;height:12px;overflow:hidden"><span class="t" style="left:0;top:0;color:#333">考试简介</span></div>
<div style="position:absolute;left:810px;top:684px;width:48px;height:12px;overflow:hidden"><span class="t" style="left:0;top:0;color:#333">考试时间</span></div>
<div style="position:absolute;left:894px;top:684px;width:48px;height:12px;overflow:hidden"><span class="t" style="left:0;top:0;color:#f00">报名时间</span></div>
<div style="position:absolute;left:726px;top:712px;width:48px;height:12px;overflow:hidden"><span class="t" style="left:0;top:0;color:#333">成绩查询</span></div>
<div style="position:absolute;left:810px;top:712px;width:48px;height:12px;overflow:hidden"><span class="t" style="left:0;top:0;color:#333">考试内容</span></div>
<div style="position:absolute;left:894px;top:712px;width:48px;height:12px;overflow:hidden"><span class="t" style="left:0;top:0;color:#333">考点一览</span></div>
<div style="position:absolute;left:726px;top:740px;width:48px;height:12px;overflow:hidden"><span class="t" style="left:0;top:0;color:#333">成绩证书</span></div>
<div style="position:absolute;left:810px;top:740px;width:48px;height:12px;overflow:hidden"><span class="t" style="left:0;top:0;color:#f00">辅导课程</span></div>
<div style="position:absolute;left:894px;top:740px;width:48px;height:12px;overflow:hidden"><span class="t" style="left:0;top:0;color:#333">教材订购</span></div>
<div style="position:absolute;left:700px;top:764px;width:270px;height:140px;border:1px solid #9bd84a;background:#fff"></div>
<div style="position:absolute;left:702px;top:766px;width:266px;height:20px;background:linear-gradient(90deg,#fff 0,#e6f9d6 4%,#dcf6c6 100%)"></div>
<svg style="position:absolute;left:712px;top:767px" width="15" height="16" viewBox="0 0 15 16"><rect x=".6" y="2.2" width="13.8" height="13" rx="1.2" fill="#fff" stroke="#5cb85c" stroke-width="1.2"/><rect x=".6" y="2.2" width="13.8" height="4" fill="#7ccf6c" stroke="#5cb85c" stroke-width="1.2"/><rect x="3" y="0" width="2.2" height="4" rx="1" fill="#e8f6e0" stroke="#5cb85c" stroke-width=".8"/><rect x="9.8" y="0" width="2.2" height="4" rx="1" fill="#e8f6e0" stroke="#5cb85c" stroke-width=".8"/><g fill="#9ad48a"><rect x="2.6" y="8" width="2.6" height="2"/><rect x="6.2" y="8" width="2.6" height="2"/><rect x="9.8" y="8" width="2.6" height="2"/><rect x="2.6" y="11.2" width="2.6" height="2"/><rect x="6.2" y="11.2" width="2.6" height="2"/><rect x="9.8" y="11.2" width="2.6" height="2"/></g></svg>
<span class="t f13 b bk" style="left:731px;top:769px;">模拟考场</span>
<div style="position:absolute;left:712px;top:801px;width:2px;height:2px;background:#222"></div>
<span class="t" style="left:719px;top:796px;color:#333;"><i>2</i><i>0</i><i>1</i><i>4</i>年<i>6</i>月英语六级考试真题在线估分</span>
<div style="position:absolute;left:712px;top:823px;width:2px;height:2px;background:#222"></div>
<span class="t" style="left:719px;top:818px;color:#333;"><i>2</i><i>0</i><i>1</i><i>4</i>年<i>6</i>月英语四级考试真题在线估分</span>
<div style="position:absolute;left:712px;top:845px;width:2px;height:2px;background:#222"></div>
<span class="t" style="left:719px;top:840px;color:#333;"><i>2</i><i>0</i><i>1</i><i>4</i>年<i>6</i>月英语六级全真模拟试题及答案<u>···</u></span>
<div style="position:absolute;left:712px;top:867px;width:2px;height:2px;background:#222"></div>
<span class="t" style="left:719px;top:862px;color:#333;"><i>2</i><i>0</i><i>1</i><i>4</i>年<i>6</i>月英语六级全真模拟试题及答案<u>···</u></span>
<div style="position:absolute;left:712px;top:889px;width:2px;height:2px;background:#222"></div>
<span class="t" style="left:719px;top:884px;color:#333;"><i>2</i><i>0</i><i>1</i><i>4</i>年<i>6</i>月英语四级全真模拟冲刺试题及<u>···</u></span>
</body></html>
